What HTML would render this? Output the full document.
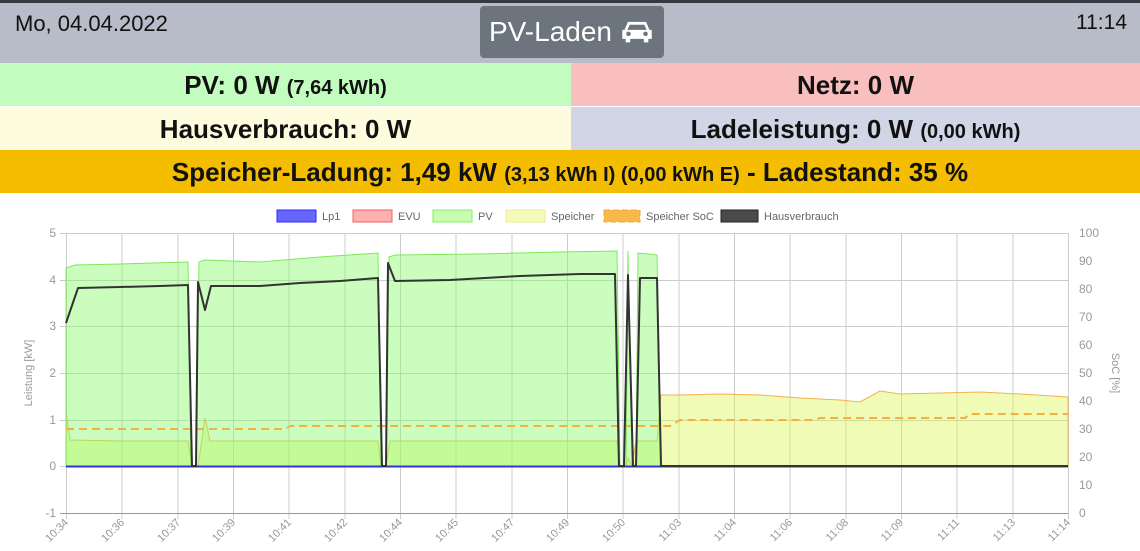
<!DOCTYPE html>
<html><head><meta charset="utf-8"><style>
*{margin:0;padding:0;box-sizing:border-box}
body{width:1140px;height:551px;background:#fff;font-family:"Liberation Sans",sans-serif;overflow:hidden;position:relative}
.top{position:absolute;left:0;top:0;width:1140px;height:3px;background:#343a40}
.hdr{position:absolute;left:0;top:3px;width:1140px;height:60px;background:#b8bcc9}
.date{position:absolute;left:15px;top:8px;font-size:22px;color:#111}
.time{position:absolute;right:13px;top:8px;font-size:21px;color:#111}
.btn{position:absolute;left:480px;top:3px;width:184px;height:52px;background:#6c757d;border-radius:4px;color:#fff;font-size:28px;line-height:52px;padding-left:9px;white-space:nowrap}
.row{position:absolute;height:43px;line-height:44px;text-align:center;font-weight:bold;font-size:26px;color:#111;white-space:nowrap}
.row small{font-size:20px}
</style></head><body>
<div class="top"></div>
<div class="hdr">
<div class="date">Mo, 04.04.2022</div>
<div class="btn">PV-Laden <svg width="34" height="26" viewBox="0 0 30 22" style="vertical-align:-3px"><path d="M7 3h16l3 7h2v8h-3v3h-4v-3H9v3H5v-3H2v-8h2z" fill="#fff"/><path d="M8.5 5.5h13l2 4.5h-17z" fill="#6c757d"/><circle cx="7.5" cy="13.5" r="2" fill="#6c757d"/><circle cx="22.5" cy="13.5" r="2" fill="#6c757d"/></svg></div>
<div class="time">11:14</div>
</div>
<div class="row" style="left:0;top:63px;width:571px;background:#c2fcbe">PV: 0 W <small>(7,64 kWh)</small></div>
<div class="row" style="left:571px;top:63px;width:569px;background:#f9bebe">Netz: 0 W</div>
<div class="row" style="left:0;top:107px;width:571px;background:#fdfcdf">Hausverbrauch: 0 W</div>
<div class="row" style="left:571px;top:107px;width:569px;background:#d0d6e5">Ladeleistung: 0 W <small>(0,00 kWh)</small></div>
<div class="row" style="left:0;top:150px;width:1140px;background:#f4bd00">Speicher-Ladung: 1,49 kW <small>(3,13 kWh I) (0,00 kWh E)</small> - Ladestand: 35 %</div>

<svg style="position:absolute;left:0;top:193px" width="1140" height="358" viewBox="0 193 1140 358" font-family="Liberation Sans, sans-serif">
<g font-size="11" fill="#666">
<rect x="277" y="210" width="39" height="12" fill="#6666ff" stroke="#2a2aff"/><text x="322" y="220">Lp1</text>
<rect x="353" y="210" width="39" height="12" fill="#ffb0b0" stroke="#f06060"/><text x="398" y="220">EVU</text>
<rect x="433" y="210" width="39" height="12" fill="#c8fcb0" stroke="#80f060"/><text x="478" y="220">PV</text>
<rect x="506" y="210" width="39" height="12" fill="#f2fcb8" stroke="#f0e890"/><text x="551" y="220">Speicher</text>
<rect x="604" y="210" width="36" height="12" fill="#fbb84a" stroke="#f5a742" stroke-dasharray="6 3"/><text x="646" y="220">Speicher SoC</text>
<rect x="721" y="210" width="37" height="12" fill="#4a4a4a" stroke="#222"/><text x="764" y="220">Hausverbrauch</text>
</g>
<g stroke="#ccc" stroke-width="1">
<line x1="60" y1="233.5" x2="1068" y2="233.5"/><line x1="60" y1="280.5" x2="1068" y2="280.5"/><line x1="60" y1="326.5" x2="1068" y2="326.5"/><line x1="60" y1="373.5" x2="1068" y2="373.5"/><line x1="60" y1="420.5" x2="1068" y2="420.5"/><line x1="60" y1="466.5" x2="1068" y2="466.5"/>
<line x1="66.5" y1="233" x2="66.5" y2="519"/><line x1="122" y1="233" x2="122" y2="519"/><line x1="178" y1="233" x2="178" y2="519"/><line x1="233.5" y1="233" x2="233.5" y2="519"/><line x1="289" y1="233" x2="289" y2="519"/><line x1="345" y1="233" x2="345" y2="519"/><line x1="400.5" y1="233" x2="400.5" y2="519"/><line x1="456" y1="233" x2="456" y2="519"/><line x1="512" y1="233" x2="512" y2="519"/><line x1="567.5" y1="233" x2="567.5" y2="519"/><line x1="623" y1="233" x2="623" y2="519"/><line x1="679" y1="233" x2="679" y2="519"/><line x1="734.5" y1="233" x2="734.5" y2="519"/><line x1="790" y1="233" x2="790" y2="519"/><line x1="846" y1="233" x2="846" y2="519"/><line x1="901.5" y1="233" x2="901.5" y2="519"/><line x1="957" y1="233" x2="957" y2="519"/><line x1="1013" y1="233" x2="1013" y2="519"/><line x1="1068.5" y1="233" x2="1068.5" y2="519"/>
</g>
<line x1="60" y1="513.5" x2="1068" y2="513.5" stroke="#999"/>
<path d="M66 466 L66 412 L70 440 L120 441 L188 441 L192 466 L198 466 L205 418 L210 441 L300 441 L378 441 L381 466 L386 466 L390 441 L500 441 L617 441 L620 466 L626 466 L628 458 L632 466 L636 441 L657 441 L661 395 L680 395 L720 394 L760 395 L800 398 L840 400 L860 402 L880 391 L900 394 L940 393 L980 392 L1020 394 L1068 397 L1068 466 Z" fill="rgba(220,245,80,0.42)" stroke="#f5b050" stroke-width="1"/>
<path d="M66 466 L66 268 L75 265 L120 264 L188 262 L191 466 L196 466 L199 262 L205 260 L260 262 L320 257 L378 253 L381 466 L386 466 L389 257 L395 255 L480 254 L560 252 L617 251 L620 466 L626 466 L628 251 L632 466 L636 466 L638 253 L657 255 L661 466 Z" fill="rgba(140,250,110,0.45)" stroke="#7ee85a" stroke-width="1"/>
<path d="M66 429 L285 429 L290 426 L660 426 L670 426 L680 420 L815 420 L820 418 L965 418 L970 414 L1068 414" fill="none" stroke="#f5b040" stroke-width="2" stroke-dasharray="8 5"/>
<line x1="66" y1="466.5" x2="1068" y2="466.5" stroke="#3333dd" stroke-width="2"/>
<path d="M66 323 L78 288 L120 287 L160 286 L188 285 L192 466 L196 466 L198 282 L205 310 L211 286 L260 286 L300 283 L340 281 L378 278 L382 466 L386 466 L388 263 L395 281 L450 280 L520 276 L580 274 L615 274 L619 466 L624 466 L628 275 L633 466 L636 466 L640 278 L657 278 L661 466 L1068 466" fill="none" stroke="#333" stroke-width="2" stroke-linejoin="round"/>
<g font-size="12" fill="#999" text-anchor="end">
<text x="56" y="237">5</text><text x="56" y="284">4</text><text x="56" y="330">3</text><text x="56" y="377">2</text><text x="56" y="424">1</text><text x="56" y="470">0</text><text x="56" y="517">-1</text>
</g>
<text transform="translate(32,373) rotate(-90)" font-size="11" fill="#999" text-anchor="middle">Leistung [kW]</text>
<g font-size="12" fill="#999">
<text x="1079" y="237">100</text><text x="1079" y="265">90</text><text x="1079" y="293">80</text><text x="1079" y="321">70</text><text x="1079" y="349">60</text><text x="1079" y="377">50</text><text x="1079" y="405">40</text><text x="1079" y="433">30</text><text x="1079" y="461">20</text><text x="1079" y="489">10</text><text x="1079" y="517">0</text>
</g>
<text transform="translate(1112,373) rotate(90)" font-size="11" fill="#999" text-anchor="middle">SoC [%]</text>
<g font-size="11" fill="#999" text-anchor="end">
<text transform="translate(69,523) rotate(-45)">10:34</text><text transform="translate(125,523) rotate(-45)">10:36</text><text transform="translate(181,523) rotate(-45)">10:37</text><text transform="translate(236,523) rotate(-45)">10:39</text><text transform="translate(292,523) rotate(-45)">10:41</text><text transform="translate(348,523) rotate(-45)">10:42</text><text transform="translate(403,523) rotate(-45)">10:44</text><text transform="translate(459,523) rotate(-45)">10:45</text><text transform="translate(515,523) rotate(-45)">10:47</text><text transform="translate(570,523) rotate(-45)">10:49</text><text transform="translate(626,523) rotate(-45)">10:50</text><text transform="translate(682,523) rotate(-45)">11:03</text><text transform="translate(737,523) rotate(-45)">11:04</text><text transform="translate(793,523) rotate(-45)">11:06</text><text transform="translate(849,523) rotate(-45)">11:08</text><text transform="translate(904,523) rotate(-45)">11:09</text><text transform="translate(960,523) rotate(-45)">11:11</text><text transform="translate(1016,523) rotate(-45)">11:13</text><text transform="translate(1071,523) rotate(-45)">11:14</text>
</g>
</svg>
</body></html>
